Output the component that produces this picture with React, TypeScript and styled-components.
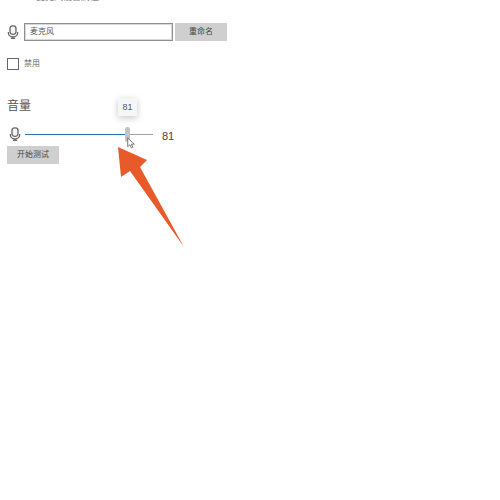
import React, { FC } from "react";
import styled, { createGlobalStyle } from "styled-components";

const GlobalStyle = createGlobalStyle`
  html, body {
    margin: 0;
    padding: 0;
    width: 500px;
    height: 500px;
    overflow: hidden;
    background: #fff;
    font-family: "Liberation Sans", "Noto Sans CJK SC", sans-serif;
  }
`;

const MicIcon: FC = () => (
  <svg width="12" height="14" viewBox="0 0 12 14" fill="none" stroke="#666" strokeWidth="1.3">
    <rect x="3" y="0.8" width="6" height="8.6" rx="2.6" fill="#f4f4f4" />
    <path d="M1.4 7v1.2a4.600 3.600 0 0 0 9.200 0V7M6 11.800v1.600M3.800 13.400h4.400" />
  </svg>
);

const App: FC = () => {
  const volume = 81;

  return (
    <Page>
      <GlobalStyle />
      <ClippedTitle>麦克风设备属性</ClippedTitle>
      <NameRow>
        <MicIcon />
        <NameInput>麦克风</NameInput>
        <GrayButton $width={52}>重命名</GrayButton>
      </NameRow>
      <CheckRow>
        <CheckBox />
        <CheckLabel>禁用</CheckLabel>
      </CheckRow>
      <SectionTitle>音量</SectionTitle>
      <SliderRow>
        <MicIcon />
        <Track>
          <TrackFill style={{ width: `${volume + 19}px` }} />
          <TrackRest />
          <Thumb />
          <Bubble>{volume}</Bubble>
          <Cursor width="8" height="12" viewBox="0 0 11 16">
            <path d="M1 1v12l3-2.600 2 4.400 2-1-2-4.200h4z" fill="#fff" stroke="#666" strokeWidth="1.200" />
          </Cursor>
        </Track>
        <VolumeValue>{volume}</VolumeValue>
      </SliderRow>
      <GrayButton $width={52}>开始测试</GrayButton>
      <Arrow width="500" height="500" viewBox="0 0 500 500">
        <polygon points="118,147 147,160 140,167 184,247 130,171 121,177" fill="#e85a2a" />
      </Arrow>
    </Page>
  );
};

const Page = styled.div`
  position: relative;
  width: 500px;
  height: 500px;
  overflow: hidden;
  box-sizing: border-box;
  padding: 0 0 0 7px;
  display: flex;
  flex-direction: column;
  align-items: flex-start;
  color: #333;
`;

const ClippedTitle = styled.div`
  height: 12px;
  margin: -9px 0 20px 29px;
  font-size: 9px;
  line-height: 12px;
  color: #888;
`;

const NameRow = styled.div`
  display: flex;
  align-items: center;
  height: 18px;

  & > svg {
    margin: 0 5px 0 0;
  }
`;

const NameInput = styled.div`
  box-sizing: border-box;
  width: 149px;
  height: 18px;
  margin-right: 2px;
  padding-left: 5px;
  border: 1px solid #8f8f8f;
  box-shadow: inset 0 0 0 1px #d8d8d8;
  font-size: 8px;
  line-height: 15px;
  color: #555;
`;

const GrayButton = styled.div<{ $width: number }>`
  width: ${(p) => p.$width}px;
  height: 18px;
  background: #cfcfcf;
  font-size: 8px;
  line-height: 18px;
  text-align: center;
  color: #444;
`;

const CheckRow = styled.div`
  display: flex;
  align-items: center;
  gap: 5px;
  margin-top: 17px;
`;

const CheckBox = styled.div`
  box-sizing: border-box;
  width: 12px;
  height: 12px;
  border: 1.5px solid #666;
`;

const CheckLabel = styled.span`
  font-size: 8px;
  line-height: 12px;
  color: #666;
`;

const SectionTitle = styled.div`
  margin-top: 29px;
  font-size: 12px;
  line-height: 14px;
  color: #555;
`;

const SliderRow = styled.div`
  display: flex;
  align-items: center;
  height: 18px;
  margin-top: 12px;
  margin-bottom: 3px;

  & > svg {
    margin-left: 2px;
    margin-right: 4px;
  }
`;

const Track = styled.div`
  position: relative;
  display: flex;
  align-items: center;
  width: 128px;
  height: 18px;
`;

const TrackFill = styled.div`
  height: 1px;
  background: #2a76ac;
`;

const TrackRest = styled.div`
  flex: 1;
  height: 1px;
  background: #a0a0a0;
`;

const Thumb = styled.div`
  position: absolute;
  left: 100px;
  top: 2px;
  width: 5px;
  height: 15px;
  border-radius: 2px;
  background: #c4c4c4;
`;

const Bubble = styled.div`
  position: absolute;
  left: 93px;
  top: -27px;
  width: 19px;
  height: 18px;
  background: #f6f6f6;
  box-shadow: 0 2px 7px rgba(0, 0, 0, 0.22);
  font-size: 9px;
  line-height: 18px;
  text-align: center;
  color: #555;
`;

const Cursor = styled.svg`
  position: absolute;
  left: 102px;
  top: 12px;
`;

const VolumeValue = styled.span`
  margin-left: 9px;
  padding-top: 3px;
  font-size: 11px;
  color: #444;
`;

const Arrow = styled.svg`
  position: absolute;
  left: 0;
  top: 0;
  pointer-events: none;
`;

export default App;
